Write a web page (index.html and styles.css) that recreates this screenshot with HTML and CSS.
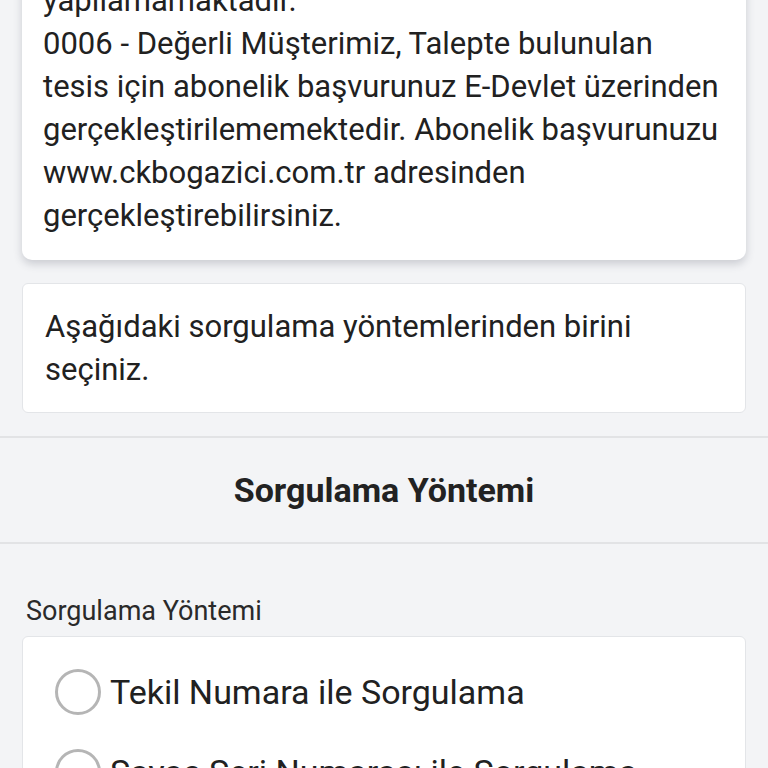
FILE: index.html
```html
<!DOCTYPE html>
<html lang="tr">
<head>
    <meta charset="UTF-8">
    <meta name="viewport" content="width=device-width, initial-scale=1.0">
    <title>Abonelik Sorgulama</title>
    <link rel="stylesheet" href="styles.css">
</head>
<body>
    <div class="page">
        <div class="cards">
            <div class="message-card">
                <p class="message-text">
                    Bu tesis için işlem<br>
                    yapılamamaktadır.<br>
                    0006 - Değerli Müşterimiz, Talepte bulunulan tesis için abonelik başvurunuz E-Devlet üzerinden gerçekleştirilememektedir. Abonelik başvurunuzu www.ckbogazici.com.tr adresinden gerçekleştirebilirsiniz.
                </p>
            </div>
            <div class="info-card">
                <p class="info-text">Aşağıdaki sorgulama yöntemlerinden birini seçiniz.</p>
            </div>
        </div>

        <div class="section-header">
            <h2>Sorgulama Yöntemi</h2>
        </div>

        <div class="form-section">
            <div class="field-label">Sorgulama Yöntemi</div>
            <div class="radio-card">
                <label class="radio-row">
                    <input type="radio" name="method" value="tekil">
                    <span class="radio-circle"></span>
                    <span class="radio-text">Tekil Numara ile Sorgulama</span>
                </label>
                <label class="radio-row">
                    <input type="radio" name="method" value="sayac">
                    <span class="radio-circle"></span>
                    <span class="radio-text">Sayaç Seri Numarası ile Sorgulama</span>
                </label>
            </div>
        </div>
    </div>
</body>
</html>
```

FILE: styles.css
```css
* {
    box-sizing: border-box;
}
body {
    margin: 0;
    font-family: Roboto, 'Noto Sans', sans-serif;
    background-color: #F3F4F6;
    color: #212121;
    overflow: hidden;
}
.page {
    margin-top: -84px;
}
.cards {
    padding: 0 22px 23px;
    display: flex;
    flex-direction: column;
    gap: 23px;
}
.message-card {
    background-color: #FFFFFF;
    border-radius: 10px;
    padding: 20px 25px 23px 21px;
    box-shadow: 0 4px 8px rgba(60, 64, 80, 0.22);
}
.message-text {
    margin: 0;
    font-size: 31px;
    line-height: 43px;
}
.info-card {
    background-color: #FFFFFF;
    border: 1px solid #E3E5E8;
    border-radius: 6px;
    padding: 21px 22px;
}
.info-text {
    margin: 0;
    font-size: 31px;
    line-height: 43px;
}
.section-header {
    border-top: 2px solid #E2E3E5;
    border-bottom: 2px solid #E2E3E5;
    height: 108px;
    display: flex;
    align-items: center;
    justify-content: center;
}
.section-header h2 {
    margin: 0;
    font-size: 34px;
    font-weight: 700;
    color: #222222;
}
.form-section {
    padding: 50px 22px 0;
}
.field-label {
    padding-left: 4px;
    font-size: 27px;
    line-height: 34px;
    color: #2A2A2A;
    margin-bottom: 8px;
}
.radio-card {
    background-color: #FFFFFF;
    border: 1px solid #E3E5E8;
    border-radius: 6px;
    padding: 32px 32px;
    display: flex;
    flex-direction: column;
    gap: 34px;
}
.radio-row {
    display: flex;
    align-items: center;
    gap: 9px;
    cursor: pointer;
}
.radio-row input {
    display: none;
}
.radio-circle {
    width: 46px;
    height: 46px;
    border: 3px solid #B5B5B5;
    border-radius: 50%;
    flex-shrink: 0;
}
.radio-text {
    font-size: 34px;
    line-height: 46px;
}
```
